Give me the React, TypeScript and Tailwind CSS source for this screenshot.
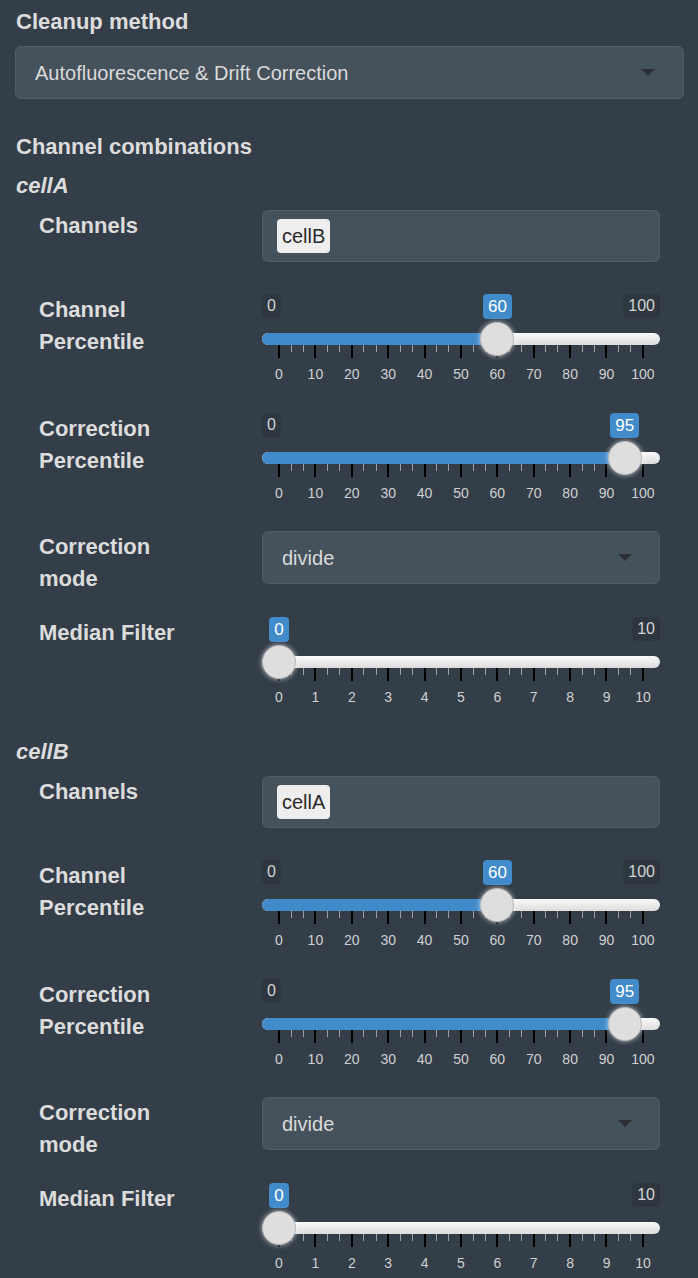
import React from "react";

const FONT = { fontFamily: '"Liberation Sans", Arial, Helvetica, sans-serif' };

function Caret() {
  return (
    <svg width="14" height="8" viewBox="0 0 14 8" className="shrink-0">
      <polygon points="0,0 14,0 7,7" fill="#2b2f33" />
    </svg>
  );
}

function SelectBox({ text, wide }: { text: string; wide?: boolean }) {
  return (
    <div
      className={
        wide
          ? "flex h-[53px] w-[669px] items-center justify-between rounded-[6px] border border-[#505c66] bg-[#45515b] pl-[19px] pr-[28px]"
          : "flex h-[53px] w-[398px] items-center justify-between rounded-[6px] border border-[#505c66] bg-[#45515b] pl-[19px] pr-[27px]"
      }
    >
      <span className="text-[20px] leading-[24px] text-[#dadada]">{text}</span>
      <Caret />
    </div>
  );
}

function ChipInput({ chip }: { chip: string }) {
  return (
    <div className="flex h-[52px] w-[398px] items-center rounded-[6px] border border-[#505c66] bg-[#45515b] pl-[14px]">
      <span className="flex h-[34px] items-center rounded-[4px] bg-[#eeeeee] px-[5px] text-[20px] leading-[24px] text-[#2a2a2a]">
        {chip}
      </span>
    </div>
  );
}

function Slider({
  min,
  max,
  value,
  hideMin,
  hideMax,
}: {
  min: number;
  max: number;
  value: number;
  hideMin?: boolean;
  hideMax?: boolean;
}) {
  const pct = (value - min) / (max - min);
  const thumbLeft = pct * 364;
  const center = 17 + thumbLeft;
  const ticks = Array.from({ length: 31 }, (_, i) => i);
  const labels = Array.from({ length: 11 }, (_, i) => min + ((max - min) / 10) * i);
  return (
    <div className="relative h-[96px] w-[398px]">
      <div className="flex h-[24px] justify-between">
        <span
          className={
            hideMin
              ? "invisible rounded-[4px] bg-[#2e3740] px-[5px] text-[16px] leading-[24px] text-[#d4d4d4]"
              : "rounded-[4px] bg-[#2e3740] px-[5px] text-[16px] leading-[24px] text-[#d4d4d4]"
          }
        >
          {min}
        </span>
        <span
          className={
            hideMax
              ? "invisible rounded-[4px] bg-[#2e3740] px-[5px] text-[16px] leading-[24px] text-[#d4d4d4]"
              : "rounded-[4px] bg-[#2e3740] px-[5px] text-[16px] leading-[24px] text-[#d4d4d4]"
          }
        >
          {max}
        </span>
      </div>
      <div className="mt-[15px] flex h-[12px] w-[398px] overflow-hidden rounded-full bg-linear-to-b from-[#fafafa] to-[#dcdcdc]">
        <div className="h-full bg-[#428bca]" style={{ width: center }} />
      </div>
      <div className="flex h-[13px] justify-between px-[17px]">
        {ticks.map((i) => (
          <div key={i} className="flex w-0 flex-col items-center">
            {i % 3 === 0 ? (
              <div className="h-[13px] w-[2px] shrink-0 bg-black" />
            ) : (
              <div className="h-[7px] w-[1px] shrink-0 bg-[#a0a0a0]" />
            )}
          </div>
        ))}
      </div>
      <div className="mt-[7px] flex justify-between px-[17px]">
        {labels.map((l) => (
          <div key={l} className="flex w-0 flex-col items-center">
            <span className="whitespace-nowrap text-[14px] leading-[18px] text-[#d0d0d0]">{l}</span>
          </div>
        ))}
      </div>
      <div
        className="absolute top-0 flex w-0 justify-center"
        style={{ left: center }}
      >
        <span className="whitespace-nowrap rounded-[4px] bg-[#428bca] px-[5px] text-[17px] leading-[25px] text-white">
          {value}
        </span>
      </div>
      <div
        className="absolute top-[28px] h-[34px] w-[34px] rounded-full border border-[#b8b8b8] bg-[#dedede] shadow-[0_0_4px_1px_rgba(255,255,255,0.45)]"
        style={{ left: thumbLeft }}
      />
    </div>
  );
}

function Label({ children }: { children: React.ReactNode }) {
  return (
    <div className="w-[223px] shrink-0">
      <div className="max-w-[165px] text-[22px] font-bold leading-[32px] text-[#dcdcdc]">{children}</div>
    </div>
  );
}

function Section({ name, chip }: { name: string; chip: string }) {
  return (
    <div>
      <div className="mb-[10px] pl-[16px] text-[22px] font-bold italic leading-[28px] text-[#dcdcdc]">{name}</div>
      <div className="mb-[32px] flex items-start pl-[39px]">
        <Label>Channels</Label>
        <ChipInput chip={chip} />
      </div>
      <div className="mb-[23px] flex items-start pl-[39px]">
        <Label>Channel Percentile</Label>
        <Slider min={0} max={100} value={60} />
      </div>
      <div className="mb-[22px] flex items-start pl-[39px]">
        <Label>Correction Percentile</Label>
        <Slider min={0} max={100} value={95} hideMax />
      </div>
      <div className="mb-[22px] flex items-start pl-[39px]">
        <Label>Correction mode</Label>
        <SelectBox text="divide" />
      </div>
      <div className="mb-[25px] flex items-start pl-[39px]">
        <Label>Median Filter</Label>
        <Slider min={0} max={10} value={0} hideMin />
      </div>
    </div>
  );
}

export default function App() {
  return (
    <div style={FONT} className="h-[1278px] w-[698px] overflow-hidden bg-[#343e48] pt-[6px]">
      <div className="pl-[16px] text-[22px] font-bold leading-[32px] text-[#dcdcdc]">Cleanup method</div>
      <div className="mt-[8px] pl-[15px]">
        <SelectBox text="Autofluorescence & Drift Correction" wide />
      </div>
      <div className="mt-[32px] pl-[16px] text-[22px] font-bold leading-[32px] text-[#dcdcdc]">
        Channel combinations
      </div>
      <div className="mt-[9px]">
        <Section name="cellA" chip="cellB" />
        <Section name="cellB" chip="cellA" />
      </div>
    </div>
  );
}
